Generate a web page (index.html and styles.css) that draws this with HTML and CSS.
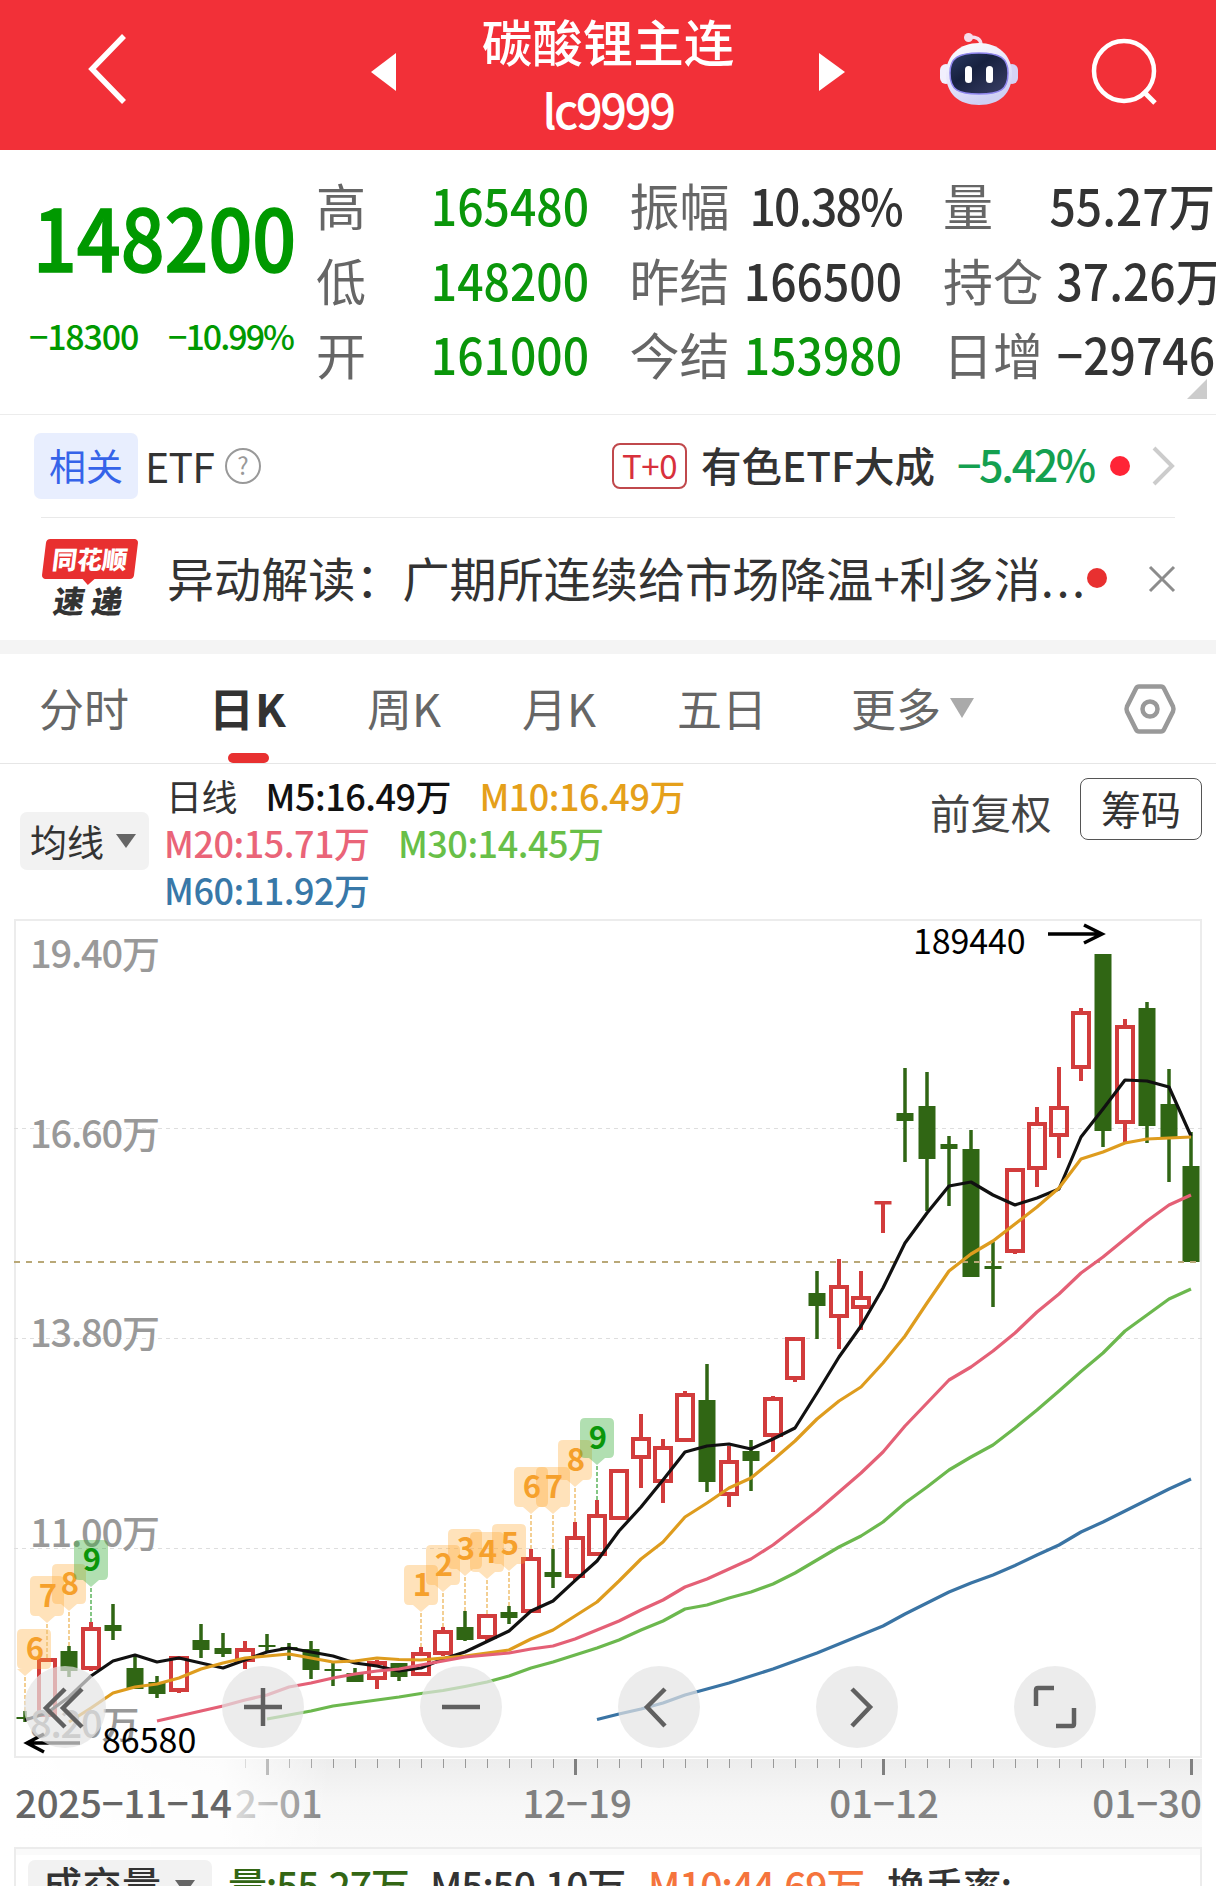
FILE: index.html
```html
<!DOCTYPE html>
<html lang="zh-CN">
<head>
<meta charset="UTF-8">
<meta name="viewport" content="width=device-width, initial-scale=1.0">
<title>碳酸锂主连 lc9999</title>
<link rel="stylesheet" href="styles.css">
</head>
<body>

<header class="topbar">
  <svg class="back" width="40" height="72" viewBox="0 0 40 72"><path d="M37 3L5 36L37 69" fill="none" stroke="#fff" stroke-width="5.500"/></svg>
  <svg class="prev" width="26" height="38" viewBox="0 0 26 38"><path d="M25 0V38L0 19Z" fill="#fff"/></svg>
  <div class="title">
    <h1>碳酸锂主连</h1>
    <p>lc9999</p>
  </div>
  <svg class="next" width="26" height="38" viewBox="0 0 26 38"><path d="M0 0V38L26 19Z" fill="#fff"/></svg>
  <svg class="robot" width="78" height="74" viewBox="0 0 78 74">
    <defs>
      <linearGradient id="shell" x1="0" y1="0" x2="0.4" y2="1">
        <stop offset="0" stop-color="#fff"/>
        <stop offset="0.6" stop-color="#e6e4fa"/>
        <stop offset="1" stop-color="#cfd0f4"/>
      </linearGradient>
      <linearGradient id="visor" x1="0" y1="0" x2="1" y2="1">
        <stop offset="0" stop-color="#2b3a63"/>
        <stop offset="0.4" stop-color="#17213f"/>
        <stop offset="1" stop-color="#3a3f66"/>
      </linearGradient>
    </defs>
    <path d="M28 5Q41 4 41 13" fill="none" stroke="#f6dfee" stroke-width="3.5"/>
    <circle cx="28.500" cy="5.500" r="4.500" fill="#f6dcea"/>
    <rect x="0" y="32" width="12" height="20" rx="6" fill="#f1effd"/>
    <rect x="66" y="32" width="12" height="20" rx="6" fill="#d5d2f5"/>
    <path d="M39 11C58 11 72 23 72 42C72 61 60 73 39 73C18 73 6 61 6 42C6 23 20 11 39 11Z" fill="url(#shell)"/>
    <path d="M39 21C60 21 68 26 68 41C68 58 60 62 39 62C18 62 10 58 10 41C10 26 18 21 39 21Z" fill="url(#visor)" stroke="#8f86ee" stroke-width="1.500"/>
    <rect x="25" y="34" width="7" height="17" rx="3.500" fill="#fff"/>
    <rect x="46" y="34" width="7" height="17" rx="3.500" fill="#fff"/>
  </svg>
  <svg class="search" width="68" height="68" viewBox="0 0 68 68"><circle cx="33" cy="33" r="30" fill="none" stroke="#fff" stroke-width="4.500"/><path d="M52 53L64 65" stroke="#fff" stroke-width="5"/></svg>
</header>

<section class="quote">
  <div class="price">
    <div class="last">148200</div>
    <div class="change"><span>−18300</span><span class="rate">−10.99%</span></div>
  </div>
  <dl class="col">
    <div><dt>高</dt><dd class="down">165480</dd></div>
    <div><dt>低</dt><dd class="down">148200</dd></div>
    <div><dt>开</dt><dd class="down">161000</dd></div>
  </dl>
  <dl class="col">
    <div><dt>振幅</dt><dd class="percent">10.38%</dd></div>
    <div><dt>昨结</dt><dd>166500</dd></div>
    <div><dt>今结</dt><dd class="down">153980</dd></div>
  </dl>
  <dl class="col last-col">
    <div><dt>量</dt><dd>55.27万</dd></div>
    <div><dt>持仓</dt><dd>37.26万</dd></div>
    <div><dt>日增</dt><dd>−29746</dd></div>
  </dl>
  <span class="corner"></span>
</section>

<section class="etf">
  <span class="tag">相关</span>
  <span class="etf-name">ETF</span>
  <span class="help">?</span>
  <span class="t0">T+0</span>
  <span class="fund">有色ETF大成</span>
  <span class="pct">−5.42%</span>
  <span class="dot"></span>
  <svg class="arrow" width="24" height="40" viewBox="0 0 24 40"><path d="M2 2L20 20L2 38" fill="none" stroke="#ccc" stroke-width="4"/></svg>
</section>

<section class="news">
  <div class="logo">
    <span class="logo-top"><b>同花顺</b></span>
    <span class="logo-bottom">速递</span>
  </div>
  <p class="headline">异动解读：广期所连续给市场降温+利多消<span>...</span></p>
  <span class="dot"></span>
  <svg class="close" width="28" height="28" viewBox="0 0 28 28"><path d="M2 2L26 26M26 2L2 26" stroke="#8c8c8c" stroke-width="3"/></svg>
</section>

<nav class="tabs">
  <a>分时</a>
  <a class="active">日K</a>
  <a>周K</a>
  <a>月K</a>
  <a>五日</a>
  <a class="more">更多<i></i></a>
  <svg class="setting" width="54" height="52" viewBox="0 0 54 52"><path d="M16 3.500H38Q40 3.500 41 5.500L50 23.500Q51 26 50 28.500L41 46.500Q40 48.500 38 48.500H16Q14 48.500 13 46.500L4 28.500Q3 26 4 23.500L13 5.500Q14 3.500 16 3.500Z" fill="none" stroke="#999" stroke-width="4.500"/><circle cx="27" cy="26" r="7.500" fill="none" stroke="#999" stroke-width="4.500"/></svg>
</nav>

<section class="legend">
  <span class="select">均线<i></i></span>
  <div class="ma">
    <div><span class="c0">日线</span><span class="c5">M5:16.49万</span><span class="c10">M10:16.49万</span></div>
    <div><span class="c20">M20:15.71万</span><span class="c30">M30:14.45万</span></div>
    <div><span class="c60">M60:11.92万</span></div>
  </div>
  <span class="adjust">前复权</span>
  <span class="chips">筹码</span>
</section>

<section class="chart">
  <svg id="kline" width="1216" height="840" viewBox="0 919 1216 840"></svg>
  <div class="tools">
    <button><svg viewBox="0 0 82 82"><path d="M41 23L22 42L41 61M58 23L39 42L58 61"/></svg></button>
    <button><svg viewBox="0 0 82 82"><path d="M22 41H60M41 22V60"/></svg></button>
    <button><svg viewBox="0 0 82 82"><path d="M22 41H60"/></svg></button>
    <button><svg viewBox="0 0 82 82"><path d="M47 23L29 41L47 60"/></svg></button>
    <button><svg viewBox="0 0 82 82"><path d="M36 23L54 41L36 60"/></svg></button>
    <button><svg viewBox="0 0 82 82"><path d="M22 40V24Q22 22 24 22H40M60 42V58Q60 60 58 60H42"/></svg></button>
  </div>
</section>

<section class="axis">
  <svg id="ticks" width="1216" height="88" viewBox="0 1759 1216 88"></svg>
</section>

<section class="volume">
  <span class="select">成交量<i></i></span>
  <span class="v0">量:55.27万</span>
  <span class="v5">M5:50.10万</span>
  <span class="v10">M10:44.69万</span>
  <span class="vr">换手率:--</span>
</section>

<script src="chart.js"></script>
</body>
</html>
```
FILE: styles.css
```css
* {
  margin: 0;
  padding: 0;
  box-sizing: border-box;
}

body {
  width: 1216px;
  height: 1886px;
  overflow: hidden;
  background: #fff;
  color: #333;
  font-family: "Noto Sans CJK SC", "Noto Sans", sans-serif;
  white-space: nowrap;
}

svg {
  display: block;
  flex: none;
}

/* Top bar */
.topbar {
  display: flex;
  align-items: flex-start;
  height: 150px;
  background: #f23038;
  color: #fff;
}

.back { margin: 33px 0 0 87px; }
.prev { margin: 53px 0 0 244px; }
.next { margin: 53px 0 0 78px; }
.robot { margin: 32px 0 0 95px; }
.search { margin: 38px 0 0 73px; }

.title {
  width: 268px;
  margin-left: 77px;
  margin-right: -1px;
  text-align: center;
}

.title h1 {
  height: 77px;
  line-height: 80px;
  font-size: 50.500px;
  font-weight: 500;
}

.title p {
  line-height: 64px;
  font-size: 47px;
  font-weight: 500;
  letter-spacing: -2.400px;
}

/* Quote */
.quote {
  position: relative;
  display: flex;
  height: 264px;
  padding-top: 16px;
}

.down { color: #0a960a; }

.price {
  width: 316px;
  color: #009900;
}

.last {
  height: 132px;
  padding-left: 33px;
  line-height: 137px;
  font-size: 86px;
  font-weight: 500;
  transform: scaleX(0.895);
  transform-origin: 33px 0;
  -webkit-text-stroke: 1.500px #009900;
}

.change {
  display: flex;
  justify-content: space-between;
  padding: 0 23px 0 29px;
  line-height: 76px;
  font-size: 34px;
  font-weight: 500;
  letter-spacing: -1.200px;
}

.change .rate { letter-spacing: -2px; }

.col {
  width: 271px;
  margin-right: 43px;
}

.last-col {
  width: 273px;
  margin-right: 0;
}

.col div {
  display: flex;
  justify-content: space-between;
  height: 74.500px;
  line-height: 76px;
  font-size: 50px;
}

.col dt { color: #666; }

.col dd {
  margin-right: -2px;
  font-weight: 500;
  transform: scaleX(0.925);
  transform-origin: right;
}

.col .percent { letter-spacing: -1.800px; }

.last-col dd { margin-right: 1px; }

.corner {
  position: absolute;
  right: 9px;
  bottom: 15px;
  border: 10px solid transparent;
  border-right-color: #ccc;
  border-bottom-color: #ccc;
}

/* Related ETF */
.etf {
  display: flex;
  align-items: center;
  height: 104px;
  padding-left: 34px;
  border-top: 1px solid #ececec;
}

.tag {
  width: 104px;
  height: 66px;
  margin-top: -2px;
  border-radius: 7px;
  background: #e8eefe;
  color: #3563e9;
  line-height: 64px;
  font-size: 37px;
  text-align: center;
}

.etf-name {
  width: 80px;
  margin-left: 7px;
  line-height: 60px;
  margin-top: -4px;
  font-size: 41px;
  letter-spacing: -0.700px;
}

.help {
  width: 36px;
  height: 36px;
  margin-top: -2px;
  border: 2px solid #999;
  border-radius: 50%;
  color: #999;
  font-size: 24px;
  line-height: 30px;
  text-align: center;
}

.t0 {
  width: 75px;
  height: 46px;
  margin-left: 351px;
  margin-top: -1px;
  border: 2px solid #c0484c;
  border-radius: 8px;
  color: #d8303c;
  line-height: 40px;
  font-size: 33px;
  letter-spacing: -0.500px;
  text-align: center;
}

.fund {
  width: 242px;
  margin: -4px 0 0 14px;
  font-size: 40.500px;
  font-weight: 500;
}

.pct {
  width: 150px;
  margin: -7px 0 0 14px;
  color: #14a050;
  font-size: 43px;
  font-weight: 500;
  letter-spacing: -2.400px;
}

.dot {
  flex: none;
  width: 20px;
  height: 20px;
  border-radius: 50%;
  background: #ff2436;
}

.etf .dot { margin: -2px 0 0 3px; }
.etf .arrow { margin: -2px 0 0 22px; }

/* News */
.news {
  display: flex;
  height: 122px;
  padding-left: 41px;
  position: relative;
}

.news::before {
  content: "";
  position: absolute;
  left: 41px;
  right: 41px;
  top: -1px;
  height: 1px;
  background: #e9e9e9;
}

.logo {
  width: 98px;
  padding-top: 21px;
}

.logo-top {
  position: relative;
  display: block;
  width: 92px;
  height: 40px;
  margin-left: 3px;
  border-radius: 4px;
  background: #e83030;
  color: #fff;
  line-height: 38px;
  font-size: 25px;
  text-align: center;
  transform: skewX(-7deg);
}

.logo-top b { font-weight: 900; }

.logo-top::after {
  content: "";
  position: absolute;
  left: 40px;
  top: 39px;
  border: 7px solid transparent;
  border-bottom: 0;
  border-top-color: #e83030;
}

.logo-bottom {
  display: block;
  margin-left: 13px;
  color: #333;
  line-height: 42px;
  font-size: 31px;
  font-weight: 900;
  letter-spacing: 7px;
  transform: skewX(-9deg);
}

.headline {
  width: 930px;
  margin-left: 28px;
  line-height: 117px;
  font-size: 47.100px;
}

.headline span {
  letter-spacing: 2.500px;
}

.news .dot {
  margin: 50px 0 0 -10px;
  background: #e83030;
}

.close { margin: 47px 0 0 41px; }

/* Tabs */
.tabs {
  display: flex;
  height: 124px;
  padding-left: 39px;
  border-top: 14px solid #f4f4f4;
  border-bottom: 1px solid #e6e6e6;
  color: #666;
  font-size: 45px;
  line-height: 107px;
}

.tabs a { margin-right: 81px; }
.tabs a:nth-child(5) { margin-right: 84px; }

.tabs .active {
  position: relative;
  margin: 0 80px 0 -1px;
  color: #333;
  font-weight: 700;
  letter-spacing: 1px;
}

.tabs .active::after {
  content: "";
  position: absolute;
  left: 19px;
  bottom: 0;
  width: 41px;
  height: 10px;
  border-radius: 5px;
  background: #e83030;
}

.tabs .more {
  display: flex;
  margin-right: 149px;
}

.more i {
  height: 20px;
  margin: 44px 0 0 9px;
  border: 12px solid transparent;
  border-top: 20px solid #aaa;
  border-bottom: 0;
}

.setting { margin-top: 29px; }

/* Moving averages */
.legend {
  display: flex;
  height: 141px;
  padding-left: 20px;
}

.select {
  display: flex;
  flex: none;
  align-items: center;
  border-radius: 7px;
  background: #f2f2f2;
}

.select i {
  border: 10px solid transparent;
  border-top: 14px solid #666;
  border-bottom: 0;
}

.legend .select {
  width: 129px;
  height: 58px;
  margin-top: 48px;
  padding-left: 10px;
  line-height: 54px;
  font-size: 37px;
}

.legend .select i { margin-left: 12px; }

.ma {
  width: 766px;
  margin-left: 15px;
  font-size: 36px;
  font-weight: 500;
  line-height: 47px;
  letter-spacing: -0.500px;
}

.ma div {
  display: flex;
  gap: 28.500px;
  height: 47px;
  padding-top: 8px;
}

.ma .c0 {
  padding-left: 2px;
  font-weight: 400;
}

.c5 { color: #111; }
.c10 { color: #e5a01a; }
.c20 { color: #ea6478; }
.c30 { color: #68bf48; }
.c60 { color: #3878a8; }

.adjust {
  width: 120px;
  color: #444;
  line-height: 95px;
  font-size: 40.500px;
}

.chips {
  width: 122px;
  height: 62px;
  margin: 14px 0 0 30px;
  border: 1px solid #555;
  border-radius: 8px;
  line-height: 58px;
  font-size: 40px;
  text-align: center;
}

/* K line */
.chart {
  position: relative;
  height: 840px;
  margin-top: 14px;
}

.chart text,
.axis text {
  font-weight: 500;
}

.tools {
  position: absolute;
  left: 24px;
  top: 747px;
  display: flex;
  gap: 116px;
}

.tools button {
  width: 82px;
  height: 82px;
  border: 0;
  border-radius: 50%;
  background: rgba(228, 228, 228, 0.700);
}

.tools path {
  fill: none;
  stroke: #606060;
  stroke-width: 4.500;
}

.axis {
  height: 88px;
  overflow: hidden;
}

/* Volume */
.volume {
  display: flex;
  height: 39px;
  margin: 0 14px;
  padding-left: 12px;
  overflow: hidden;
  border: 2px solid #ececec;
  border-bottom: 0;
  background: linear-gradient(#fafafa 6px, #fff 6px);
  font-size: 39px;
  font-weight: 500;
  line-height: 71px;
  letter-spacing: -1.200px;
}

.volume .select {
  width: 184px;
  height: 60px;
  margin-top: 11px;
  padding-left: 15px;
  line-height: 46px;
  align-items: flex-start;
  letter-spacing: 0.500px;
}

.volume .select i { margin: 20px 0 0 13px; }
.v0 { width: 202px; margin-left: 16px; color: #336614; }
.v5 { width: 218px; }
.v10 { width: 239px; color: #f5743c; }
```
FILE: chart.js
```js
// Candle columns are 22px apart, the first one sits at x = 25
var STEP = 22, X0 = 25;
var FONT = '"Noto Sans CJK SC", sans-serif';

// [direction, high, body top, body bottom, low]
var candles = [
  ["g", 1711, 1717, 1719, 1722], ["r", 1658, 1658, 1717, 1717], ["g", 1646, 1651, 1671, 1677],
  ["r", 1622, 1627, 1670, 1671], ["g", 1604, 1625, 1631, 1640], ["g", 1654, 1668, 1689, 1689],
  ["g", 1676, 1682, 1694, 1698], ["r", 1656, 1656, 1692, 1693], ["g", 1624, 1640, 1650, 1658],
  ["g", 1633, 1648, 1654, 1657], ["r", 1641, 1648, 1662, 1669], ["g", 1634, 1645, 1647, 1652],
  ["g", 1643, 1647, 1649, 1660], ["g", 1641, 1649, 1670, 1679], ["g", 1662, 1669, 1671, 1686],
  ["g", 1668, 1673, 1682, 1682], ["r", 1660, 1661, 1680, 1689], ["g", 1663, 1663, 1677, 1681],
  ["r", 1647, 1652, 1676, 1676], ["r", 1627, 1630, 1655, 1656], ["g", 1611, 1627, 1640, 1641],
  ["r", 1614, 1614, 1639, 1641], ["g", 1606, 1612, 1618, 1624], ["r", 1549, 1557, 1613, 1613],
  ["g", 1549, 1572, 1577, 1588], ["r", 1522, 1536, 1578, 1580], ["r", 1500, 1514, 1556, 1556],
  ["r", 1469, 1469, 1520, 1520], ["r", 1414, 1437, 1459, 1488], ["r", 1439, 1446, 1483, 1503],
  ["r", 1391, 1393, 1442, 1442], ["g", 1364, 1400, 1482, 1492], ["r", 1446, 1460, 1496, 1507],
  ["g", 1440, 1451, 1461, 1491], ["r", 1396, 1397, 1437, 1452], ["r", 1337, 1337, 1380, 1382],
  ["g", 1271, 1293, 1306, 1339], ["r", 1259, 1285, 1318, 1349], ["r", 1271, 1296, 1309, 1330],
  ["t", 1201, 1201, 1205, 1233], ["g", 1068, 1113, 1121, 1162], ["g", 1072, 1106, 1159, 1211],
  ["g", 1136, 1144, 1149, 1206], ["g", 1130, 1149, 1277, 1277], ["g", 1242, 1266, 1269, 1307],
  ["r", 1168, 1168, 1253, 1254], ["r", 1107, 1122, 1170, 1187], ["r", 1067, 1106, 1137, 1158],
  ["r", 1008, 1011, 1069, 1081], ["g", 954, 954, 1131, 1147], ["r", 1019, 1025, 1124, 1142],
  ["g", 1002, 1008, 1126, 1143], ["g", 1069, 1104, 1137, 1182], ["g", 1132, 1166, 1262, 1262]
];

var lines = [
  { color: "#111", from: 0, y: [1720, 1713, 1697, 1676, 1661, 1655, 1662, 1658, 1663, 1668, 1660, 1652, 1648, 1652, 1656, 1663, 1666, 1671, 1668, 1659, 1652, 1641.5, 1631, 1611, 1601, 1580.6, 1561, 1531, 1507, 1480, 1452, 1446, 1444, 1449, 1439, 1428, 1393, 1357, 1326, 1288, 1243, 1213, 1186, 1182, 1195, 1205, 1198, 1189, 1137, 1109, 1080, 1081, 1087, 1136] },
  { color: "#de9c1e", from: 2, y: [1722, 1708, 1693, 1687, 1684, 1678, 1669, 1663, 1658, 1656, 1654, 1658, 1662, 1661, 1658, 1659.5, 1660, 1658, 1656, 1653, 1650, 1639, 1630, 1616, 1602, 1581, 1559, 1542, 1517, 1503, 1488, 1478, 1460, 1441, 1419, 1401, 1387, 1363, 1336, 1303, 1271, 1254, 1241, 1224, 1207, 1188, 1159, 1152, 1143, 1139, 1138, 1137] },
  { color: "#e46076", from: 6, y: [1721, 1716, 1711, 1706, 1700, 1695, 1687, 1683, 1678, 1674, 1671, 1669, 1665, 1661, 1657, 1655, 1653, 1649, 1646, 1639, 1630, 1621, 1610, 1600, 1587, 1579, 1569, 1559, 1545, 1528, 1511, 1492, 1473, 1452, 1426, 1403, 1380, 1367, 1351, 1333, 1312, 1294, 1273, 1257, 1239, 1221, 1205, 1195] },
  { color: "#6cb84e", from: 11, y: [1719, 1715, 1711, 1706, 1703, 1700, 1697, 1693.5, 1690.5, 1686.5, 1682, 1676, 1668, 1662, 1655, 1648, 1640, 1630, 1621, 1609, 1605, 1598, 1592, 1584, 1573, 1560, 1547, 1536, 1522, 1503, 1487, 1470, 1457, 1445, 1428, 1410, 1391, 1371.5, 1353, 1331, 1315, 1299, 1289] },
  { color: "#3a74a4", from: 26, y: [1719.5, 1714, 1709, 1703, 1695, 1689, 1683, 1676, 1669, 1661, 1653, 1644, 1635, 1626, 1614, 1603, 1592, 1583, 1575, 1565.5, 1555, 1545, 1532, 1522, 1511, 1500, 1489, 1479] }
];

// column index -> count label
var marks = [[0, 6], [1, 7], [2, 8], [3, 9], [18, 1], [19, 2], [20, 3], [21, 4], [22, 5], [23, 6], [24, 7], [25, 8], [26, 9]];

function x(i) {
  return X0 + i * STEP;
}

function rect(left, top, w, h, fill) {
  return '<rect x="' + left + '" y="' + top + '" width="' + w + '" height="' + h + '" fill="' + fill + '"/>';
}

function line(x1, y1, x2, y2, color, width, dash) {
  return '<line x1="' + x1 + '" y1="' + y1 + '" x2="' + x2 + '" y2="' + y2 + '" stroke="' + color +
    '" stroke-width="' + width + '"' + (dash ? ' stroke-dasharray="' + dash + '"' : '') + '/>';
}

function text(left, base, size, color, str, extra) {
  return "<text x='" + left + "' y='" + base + "' font-size='" + size + "' fill='" + color +
    "' font-family='" + FONT + "' " + (extra || "") + ">" + str + "</text>";
}

function drawChart() {
  var s = "";
  s += '<rect x="15" y="920" width="1186" height="837" fill="none" stroke="#ececec" stroke-width="2"/>';
  [1128.5, 1338.5, 1548.5].forEach(function (y) {
    s += line(14, y, 1202, y, "#dedede", 1, "4 4");
  });

  candles.forEach(function (c, i) {
    var cx = x(i);
    if (c[0] == "g") {
      s += rect(cx - 1.75, c[1], 3.5, c[4] - c[1], "#306614");
      s += rect(cx - 8.5, c[2], 17, c[3] - c[2], "#306614");
    } else if (c[0] == "t") {
      s += rect(cx - 8.5, c[2], 17, 3.5, "#d23c3c");
      s += rect(cx - 2, c[1], 4, c[4] - c[1], "#d23c3c");
    } else {
      s += rect(cx - 2, c[1], 4, c[2] - c[1], "#d23c3c");
      s += rect(cx - 2, c[3], 4, c[4] - c[3], "#d23c3c");
      s += '<rect x="' + (cx - 8) + '" y="' + (c[2] + 2) + '" width="16" height="' + (c[3] - c[2] - 4) +
        '" fill="none" stroke="#d23c3c" stroke-width="4"/>';
    }
  });

  // latest price
  s += line(14, 1262, 1202, 1262, "#b9a877", 2, "6 6");

  lines.forEach(function (l) {
    var pts = l.y.map(function (y, i) { return x(l.from + i) + "," + y; }).join(" ");
    s += '<polyline points="' + pts + '" fill="none" stroke="' + l.color + '" stroke-width="3.2" stroke-linejoin="round"/>';
  });

  [["19.40万", 968], ["16.60万", 1148], ["13.80万", 1347], ["11.00万", 1547], ["8.20万", 1738]].forEach(function (a) {
    s += text(30, a[1], 38, "#999", a[0], "letter-spacing='-1.2'");
  });

  marks.forEach(function (m) {
    var cx = x(m[0]), high = candles[m[0]][1], top = high - 82;
    var bx = Math.max(cx - 17, 17);
    var nine = m[1] == 9;
    s += line(cx, high - 34, cx, high, nine ? "#5cb45c" : "#f0c070", 1.5, "4 2");
    s += '<path d="M' + (bx + 5) + ' ' + top + 'h24q5 0 5 5v30q0 5 -5 5H' + (cx + 8) + 'l-8 7l-8 -7' +
      'H' + (bx + 5) + 'q-5 0 -5 -5v-30q0 -5 5 -5z" fill="' + (nine ? "rgba(60,176,60,0.4)" : "rgba(255,166,46,0.33)") + '"/>';
    s += text(bx + 18, top + 31, 31, nine ? "#0a960a" : "#f5a02c", m[1], "text-anchor='middle' style='font-weight:700'");
  });

  s += text(913, 954, 34, "#000", "189440", "style='font-weight:400' letter-spacing='-0.1'");
  s += '<path d="M1048 934H1102M1084 925L1102 934L1084 943" fill="none" stroke="#000" stroke-width="3.5"/>';
  s += text(102, 1753, 34, "#000", "86580", "style='font-weight:400' letter-spacing='0'");
  s += '<path d="M80 1743H27M44 1734L27 1743L44 1752" fill="none" stroke="#000" stroke-width="3.5"/>';
  document.getElementById("kline").innerHTML = s;
}

function drawAxis() {
  var s = '<defs><linearGradient id="shade" x1="0" y1="0" x2="0" y2="1">' +
    '<stop offset="0" stop-color="#ededed"/><stop offset="0.5" stop-color="#f7f7f7"/><stop offset="1" stop-color="#fafafa"/></linearGradient>' +
    '<linearGradient id="fade"><stop offset="0" stop-color="#fff"/><stop offset="0.65" stop-color="#fff" stop-opacity="0.85"/>' +
    '<stop offset="1" stop-color="#fff" stop-opacity="0"/></linearGradient></defs>';
  s += rect(14, 1759, 1188, 88, "url(#shade)");
  for (var i = 10; i < 54; i++) {
    var major = (i - 11) % 14 == 0;
    s += rect(major ? x(i) - 1 : x(i), 1759, major ? 3 : 1, major ? 16 : 9, major ? "#808080" : "#999");
  }
  s += text(235, 1818, 38.5, "#808080", "2−01");
  s += text(577, 1818, 38.5, "#808080", "12−19", "text-anchor='middle'");
  s += text(884, 1818, 38.5, "#808080", "01−12", "text-anchor='middle'");
  s += text(1202, 1818, 38.5, "#808080", "01−30", "text-anchor='end'");
  s += rect(14, 1759, 316, 88, "url(#fade)");
  s += text(15, 1818, 38.5, "#666", "2025−11−14", "textLength='217'");
  document.getElementById("ticks").innerHTML = s;
}

drawChart();
drawAxis();
```
